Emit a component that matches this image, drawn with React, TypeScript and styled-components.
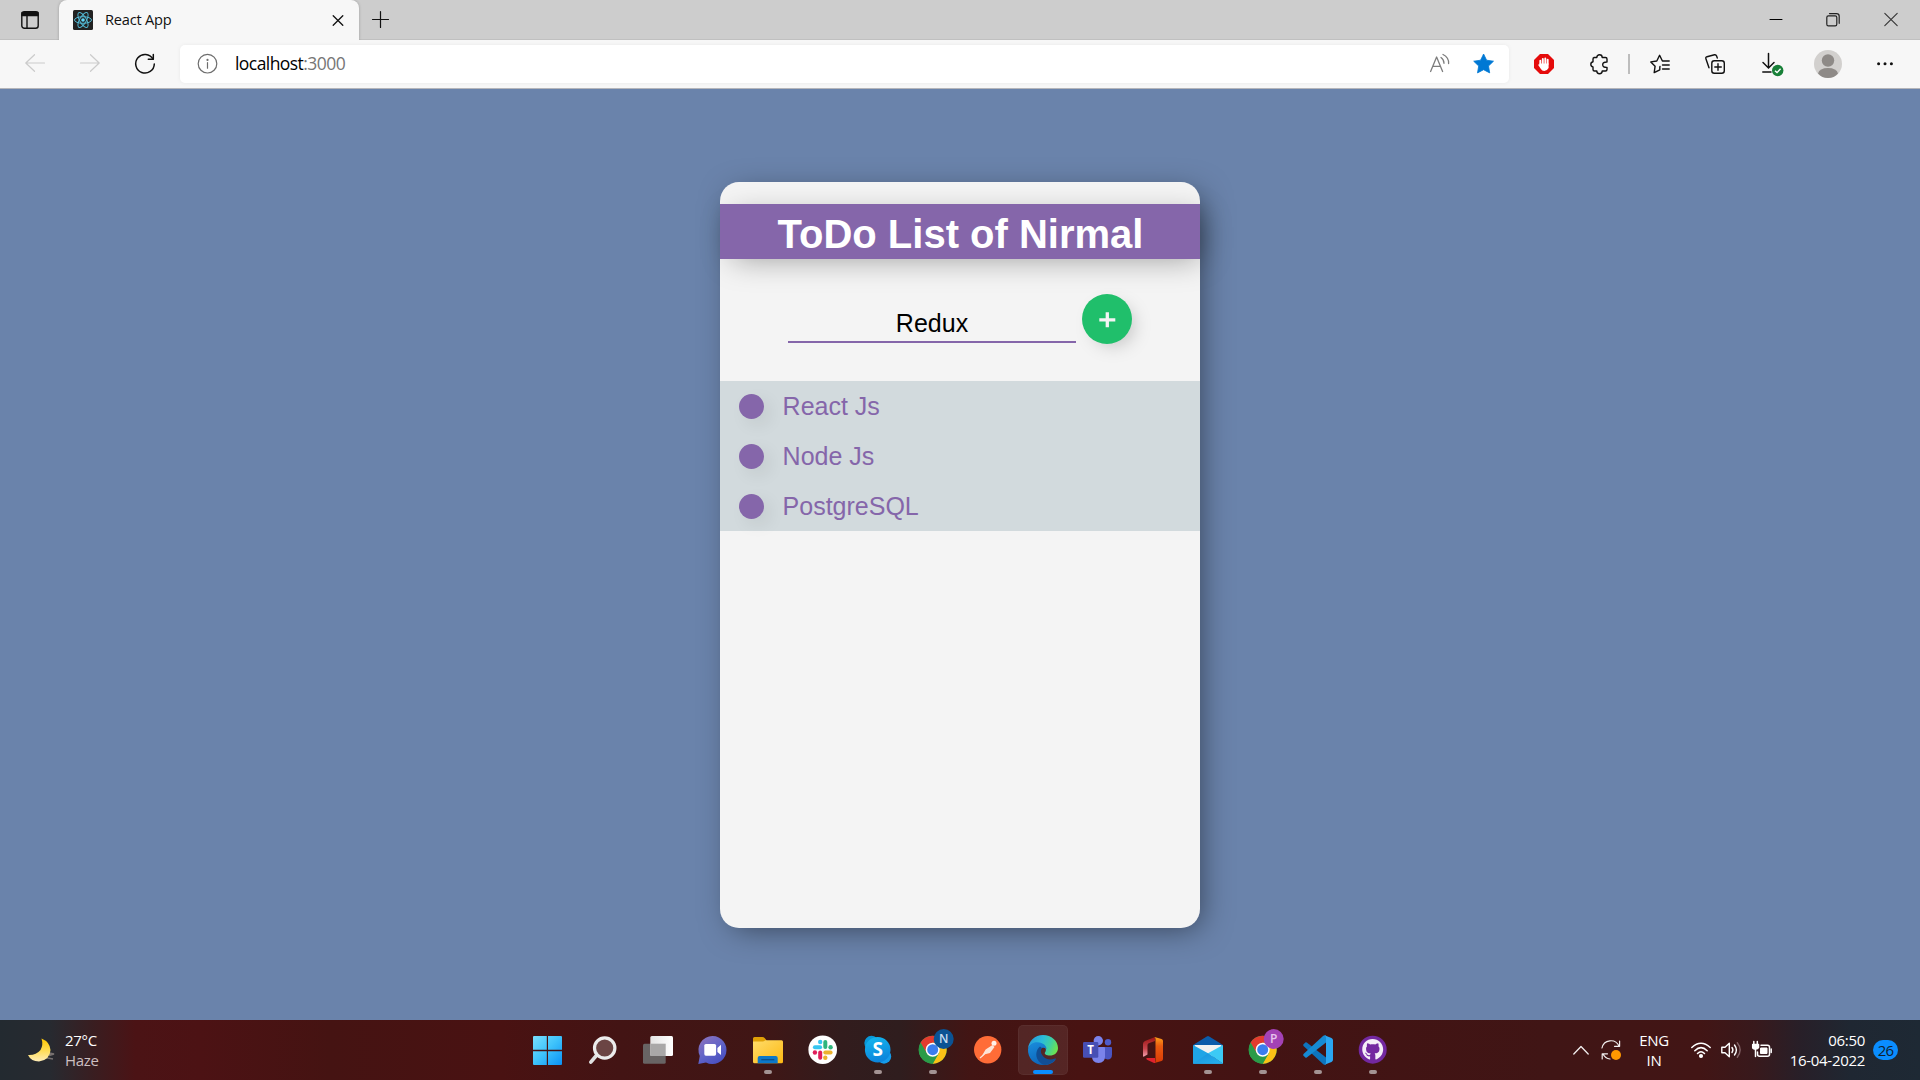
import React from "react";
import styled, { createGlobalStyle } from "styled-components";
import { FaGithub } from "react-icons/fa";

const Global = createGlobalStyle`
  * { box-sizing: border-box; }
  body { margin: 0; overflow: hidden; }
  button, input { font: inherit; border: 0; padding: 0; background: none; outline: 0; }
  svg { display: block; flex: none; overflow: visible; }
`;

const ui = `"Open Sans", "Noto Sans", sans-serif`;

const Screen = styled.div`
  width: 1920px;
  height: 1080px;
  display: flex;
  flex-direction: column;
  font-family: ${ui};
  overflow: hidden;
`;

/* ---------- Browser ---------- */

const TabStrip = styled.header`
  height: 40px;
  flex: none;
  display: flex;
  padding-right: 1px;
  background: #cdcdcd;
  box-shadow: inset 0 -1px 0 #c0c0c0;
`;

const Cell = styled.div<{ $w: number }>`
  width: ${(p) => p.$w}px;
  height: 100%;
  flex: none;
  display: flex;
  align-items: center;
  justify-content: center;
`;

const Tab = styled.div`
  width: 300px;
  height: 40px;
  padding: 0 15px 0 14px;
  display: flex;
  align-items: center;
  background: #f7f7f7;
  border-radius: 8px 8px 0 0;
  box-shadow: 0 0 3px rgba(0, 0, 0, 0.25);
  clip-path: inset(0 -4px 0 -4px);
`;

const TabTitle = styled.span`
  flex: 1;
  padding: 0 0 2px 12px;
  font-size: 14.6px;
  letter-spacing: -0.2px;
  line-height: 20px;
  color: #111;
`;

const Spacer = styled.div`
  flex: 1;
`;

const Toolbar = styled.nav`
  height: 49px;
  flex: none;
  display: flex;
  align-items: center;
  padding-left: 7px;
  background: #f7f7f7;
  border-bottom: 1px solid #b4b5ba;
`;

const Address = styled.div`
  width: 1329px;
  height: 38px;
  margin: 0 7px 0 0;
  padding: 0 15px 0 18px;
  display: flex;
  align-items: center;
  background: #fff;
  border-radius: 5px;
  box-shadow: 0 0 4px rgba(0, 0, 0, 0.06);
`;

const Url = styled.span`
  flex: 1;
  padding: 0 0 2px 17px;
  font-size: 17.5px;
  letter-spacing: -0.56px;
  line-height: 24px;
  color: #000;
  span { color: #767676; }
`;

const Divider = styled.div`
  width: 2px;
  height: 20px;
  margin: 0 1px;
  background: #bdbdbd;
`;

const AddressIcons = styled.div`
  display: flex;
  align-items: center;
  gap: 24px;
`;

/* ---------- Page ---------- */

const Page = styled.main`
  flex: 1;
  min-height: 0;
  padding-top: 93px;
  background: #6a83ab;
  font-family: "Liberation Sans", Arial, sans-serif;
`;

const lift = "6.25px 6.25px 31.25px -6.25px rgba(0, 0, 0, 0.5)";
const headerLift = "6.25px 6.25px 31.25px -6.25px rgba(0, 0, 0, 0.36)";
const softLift = "6.25px 6.25px 18.75px -6.25px rgba(0, 0, 0, 0.25)";

const Card = styled.section`
  width: 480px;
  height: 746px;
  margin: 0 auto;
  padding-top: 22px;
  background: #f4f4f4;
  border-radius: 19px;
  box-shadow: ${lift};
`;

const Title = styled.h1`
  margin: 0;
  height: 55px;
  padding: 7px 0 0 1px;
  background: #8566aa;
  color: #fff;
  font-size: 40px;
  line-height: 46px;
  text-align: center;
  box-shadow: ${headerLift};
`;

const Form = styled.form`
  display: flex;
  align-items: flex-start;
  gap: 6px;
  padding: 35px 68px 37px;
`;

const Field = styled.input`
  width: 288px;
  height: 49px;
  padding: 13px 0 2px;
  border-bottom: 2px solid #8566aa;
  font-size: 25px;
  text-align: center;
  color: #000;
`;

const Add = styled.button`
  width: 50px;
  height: 50px;
  display: flex;
  align-items: center;
  justify-content: center;
  border-radius: 50%;
  background: #20bf6b;
  box-shadow: ${softLift};
`;

const List = styled.ul`
  margin: 0;
  padding: 0;
  list-style: none;
  background: #d2dadd;
`;

const Item = styled.li`
  height: 50px;
  padding-left: 19px;
  display: flex;
  align-items: center;
  gap: 18.6px;
  font-size: 25px;
  line-height: 30px;
  color: #8566aa;
`;

const Dot = styled.button`
  width: 25px;
  height: 25px;
  margin-top: 1px;
  border-radius: 50%;
  background: #8566aa;
  box-shadow: 6.25px 6.25px 18.75px -3px rgba(0, 0, 0, 0.12);
`;

/* ---------- Taskbar ---------- */

const Taskbar = styled.footer`
  height: 60px;
  flex: none;
  display: flex;
  align-items: center;
  color: #fff;
  background: linear-gradient(
    90deg,
    #232a30 0, #272a30 50px, #3a1d20 95px, #4b1315 135px, #4c1214 200px, #451312 330px,
    #491212 500px, #431414 620px, #401615 760px, #321c1d 840px, #2f1d1e 900px, #421514 970px,
    #481312 1080px, #431313 1250px, #401515 1550px, #421515 1700px, #38191c 1755px,
    #281f28 1800px, #1f2732 1850px, #1e2934 1920px
  );
`;

const Weather = styled.div`
  width: 523px;
  padding-left: 27px;
  display: flex;
  align-items: center;
  gap: 9px;
`;

const Lines = styled.div<{ $align?: string; $w?: number }>`
  width: ${(p) => (p.$w ? p.$w + "px" : "auto")};
  padding-bottom: 1px;
  text-align: ${(p) => p.$align || "left"};
  font-size: 15px;
  line-height: 20px;
  letter-spacing: -0.3px;
  white-space: nowrap;
`;

const Muted = styled.div`
  color: #cdbfc1;
`;

const Apps = styled.div`
  display: flex;
  gap: 5px;
`;

const Tile = styled.div<{ $active?: boolean }>`
  width: 50px;
  height: 50px;
  display: grid;
  border-radius: 5px;
  background: ${(p) => (p.$active ? "rgba(255,255,255,.08)" : "none")};
  box-shadow: ${(p) => (p.$active ? "inset 0 0 0 1px rgba(255,255,255,.04)" : "none")};
  > * { grid-area: 1 / 1; }
`;

const Marker = styled.i<{ $active?: boolean }>`
  align-self: end;
  justify-self: center;
  width: ${(p) => (p.$active ? 20 : 8)}px;
  height: 4px;
  margin-bottom: 1px;
  border-radius: 2px;
  background: ${(p) => (p.$active ? "#0a8dff" : "#a39393")};
`;

const Tray = styled.div`
  flex: 1;
  display: flex;
  align-items: center;
  padding-left: 175px;
`;

const Network = styled.div`
  display: flex;
  padding: 0 10px 0 17px;
`;

const Count = styled.div`
  width: 25px;
  height: 20px;
  margin-left: 8px;
  border-radius: 10px;
  background: #0a8dff;
  color: #10202e;
  font-size: 15px;
  line-height: 20px;
  letter-spacing: -0.9px;
  text-align: center;
`;

const Line = ({ w = 20, h = 20, d, c = "#111", s = 1.5, children }: any) => (
  <svg width={w} height={h} viewBox={`0 0 ${w} ${h}`} fill="none" stroke={c} strokeWidth={s} strokeLinecap="round" strokeLinejoin="round">
    {d && <path d={d} />}
    {children}
  </svg>
);

const Art = ({ children }: { children: React.ReactNode }) => (
  <svg width="50" height="50" viewBox="0 0 50 50">{children}</svg>
);

const BadgeLetter = ({ fill, color, children }: any) => (
  <>
    <circle cx="35.7" cy="14" r="10" fill={fill} />
    <text x="35.7" y="18.3" fontSize="12" fontWeight="600" fontFamily={ui} textAnchor="middle" fill={color}>{children}</text>
  </>
);

const Chrome = () => (
  <g transform="translate(24.7 24.7)">
    <circle r="14" fill="#34a853" />
    <path d="M-12.1-7A14 14 0 0 1 12.1-7H0L-6 3.5Z" fill="#e33b2e" />
    <path d="M12.1-7A14 14 0 0 1 0 14L6 3.5L0-7Z" fill="#fbc116" />
    <path d="M-12.1-7A14 14 0 0 0 0 14L6 3.5L-6 3.5Z" fill="#2a9b48" />
    <circle r="7" fill="#fff" />
    <circle r="5.5" fill="#3b7ded" />
  </g>
);

const apps: { art: React.ReactNode; running?: boolean; active?: boolean }[] = [
  {
    art: (
      <Art>
        <defs>
          <linearGradient id="win" gradientUnits="userSpaceOnUse" x1="10" y1="10" x2="39" y2="39">
            <stop stopColor="#7be0fd" /><stop offset=".5" stopColor="#3fc3fb" /><stop offset="1" stopColor="#0c93f5" />
          </linearGradient>
        </defs>
        <path fill="url(#win)" d="M11 11H23.8V24.8H10V12Q10 11 11 11ZM25 11H38Q39 11 39 12V24.8H25ZM10 26.2H23.8V40H11Q10 40 10 39ZM25 26.2H39V39Q39 40 38 40H25Z" />
      </Art>
    ),
  },
  {
    art: (
      <Art>
        <path d="M18 31L12.8 37.2" stroke="#dfe0e0" strokeWidth="3.6" strokeLinecap="round" />
        <circle cx="26.7" cy="23" r="10.2" fill="#6b4544" stroke="#ececec" strokeWidth="3.2" />
      </Art>
    ),
  },
  {
    art: (
      <Art>
        <defs>
          <linearGradient id="tv"><stop stopColor="#e4e4e4" /><stop offset="1" stopColor="#fff" /></linearGradient>
        </defs>
        <rect x="10" y="18.7" width="22.7" height="20" rx="1.5" fill="#686464" />
        <rect x="17.3" y="11" width="22.7" height="20" rx="1.5" fill="url(#tv)" />
        <path d="M17.3 18.7H32.7V31H17.3Z" fill="#a9a8a8" />
      </Art>
    ),
  },
  {
    art: (
      <Art>
        <defs>
          <linearGradient id="chat" x2=".7" y2="1"><stop stopColor="#9175bd" /><stop offset=".6" stopColor="#5f63c8" /><stop offset="1" stopColor="#484fc0" /></linearGradient>
        </defs>
        <path fill="url(#chat)" d="M24.6 11A14 14 0 1 1 18 37.4L10.3 39L11.8 31A14 14 0 0 1 24.6 11Z" />
        <rect x="16.3" y="19" width="11.8" height="11.7" rx="1.6" fill="#fff" />
        <path d="M29.4 23L33 19.8V30L29.4 27Z" fill="#fff" />
      </Art>
    ),
  },
  {
    running: true,
    art: (
      <Art>
        <defs>
          <linearGradient id="fold" x2="1" y2="1"><stop stopColor="#ffdc6a" /><stop offset="1" stopColor="#fdb913" /></linearGradient>
        </defs>
        <path d="M10 13.5Q10 12 11.5 12H19.5Q20.8 12 21.6 13L23.5 15.3V20H10Z" fill="#dfa007" />
        <path d="M10 16.5H19.5Q21 16.5 22.3 15.3H38.5Q40 15.3 40 16.8V36.8Q40 38.3 38.5 38.3H11.5Q10 38.3 10 36.8Z" fill="url(#fold)" />
        <path d="M14.7 38.3V33Q14.7 31 16.7 31H32.7Q34.7 31 34.7 33V38.3Z" fill="#0c78c8" />
        <path d="M18.3 34.7H31.3" stroke="#0a4e8c" strokeWidth="1.3" />
      </Art>
    ),
  },
  {
    art: (
      <Art>
        <circle cx="24.7" cy="24.7" r="14.3" fill="#fff" />
        <g transform="translate(24.7 24.7)" strokeWidth="4" strokeLinecap="round">
          <path d="M-7.8-2.4H-2.6" stroke="#36c5f0" /><circle cx="-2.5" cy="-7.7" r="2.2" fill="#36c5f0" />
          <path d="M2.6-7.8V-2.6" stroke="#2eb67d" /><circle cx="7.9" cy="-2.5" r="2.2" fill="#2eb67d" />
          <path d="M2.6 2.8H7.9" stroke="#ecb22e" /><circle cx="2.6" cy="8" r="2.2" fill="#ecb22e" />
          <path d="M-2.5 2.8V8" stroke="#e01e5a" /><circle cx="-7.8" cy="2.8" r="2.2" fill="#e01e5a" />
        </g>
      </Art>
    ),
  },
  {
    running: true,
    art: (
      <Art>
        <defs>
          <linearGradient id="sky" x2=".3" y2="1"><stop stopColor="#13b9ef" /><stop offset="1" stopColor="#0c86dc" /></linearGradient>
        </defs>
        <circle cx="18.5" cy="18" r="7.2" fill="#0898d8" />
        <circle cx="31" cy="31.5" r="7.2" fill="#159cea" />
        <circle cx="24.7" cy="24.7" r="12.8" fill="url(#sky)" />
        <text x="24.7" y="31.4" fontSize="19" fontWeight="700" fontFamily={ui} textAnchor="middle" fill="#fff">S</text>
      </Art>
    ),
  },
  { running: true, art: <Art><Chrome /><BadgeLetter fill="#0b5394" color="#c8dcf0">N</BadgeLetter></Art> },
  {
    art: (
      <Art>
        <circle cx="24.7" cy="24.7" r="13.7" fill="#ff6c37" />
        <circle cx="31" cy="18.2" r="2.5" fill="#fff0e8" />
        <path d="M29.5 20L31.5 22L27 28L22 29.2L18 32.6L22.6 24.5Z" fill="#fde3d6" />
        <path d="M21.5 29L17 33" stroke="#fde3d6" strokeWidth="1.2" />
      </Art>
    ),
  },
  {
    running: true,
    active: true,
    art: (
      <Art>
        <defs>
          <linearGradient id="e1" x1="0" x2="1" y1=".2" y2=".5"><stop stopColor="#2697dc" /><stop offset=".45" stopColor="#2bbcd9" /><stop offset=".75" stopColor="#40d0a0" /><stop offset="1" stopColor="#6be154" /></linearGradient>
          <linearGradient id="e2" x2=".5" y2="1"><stop stopColor="#1a8ddd" /><stop offset="1" stopColor="#0c64b8" /></linearGradient>
        </defs>
        <path fill="url(#e1)" d="M10 24C10.5 16 17 10 25 10C33.5 10 40 16 40 23C40 28 36 30.5 32 30.5C28 30.5 26 29 27 27.5C29 25 28 20 21.5 18.2C16 17 11.5 20 10 24Z" />
        <path fill="url(#e2)" d="M10 24C11.5 19.5 15 17 19.5 17.2C25 17.3 29 21 28.5 24.5C28 23.5 26.5 22.3 24 23C20 25 20.5 33 27 36.5C31 38.5 35 36.5 38 34C35.5 38 31 40 25.5 40C16 40 9.5 33 10 24Z" />
        <path fill="#114e94" d="M22 21.5C17.5 25 16.5 33 22.5 38C24 39.3 25.5 40 27 39.9C31.5 39.6 36 37 38.2 33.3C37.5 33 33 36 28 33.5C23.5 31 21.5 26 24 23Z" />
      </Art>
    ),
  },
  {
    art: (
      <Art>
        <circle cx="35" cy="17.3" r="3.2" fill="#4f5bc9" />
        <path d="M30 22H38Q39 22 39 23V29.5Q39 34.5 34.5 34.5L30 33Z" fill="#4b55c2" />
        <circle cx="25.3" cy="15.7" r="4.7" fill="#7b83eb" />
        <path d="M19 22H31Q32 22 32 23V31.5Q32 38 25.5 38T19 31.5Z" fill="#7b83eb" />
        <rect x="10" y="17" width="15.3" height="15.7" rx="1.3" fill="#474fb4" />
        <text x="17.5" y="28.8" fontSize="11.5" fontWeight="700" fontFamily={ui} textAnchor="middle" fill="#fff">T</text>
      </Art>
    ),
  },
  {
    art: (
      <Art>
        <defs>
          <linearGradient id="o1" x2="0" y2="1"><stop stopColor="#9c1414" /><stop offset=".6" stopColor="#c8454c" /><stop offset="1" stopColor="#f4a0ae" /></linearGradient>
          <linearGradient id="o2" x2="0" y2="1"><stop stopColor="#ffa01a" /><stop offset=".35" stopColor="#e95a10" /><stop offset="1" stopColor="#d93a05" /></linearGradient>
        </defs>
        <path d="M27 12L17 16Q15 17 15 19V31Q15 32 16 31.5L19.5 29.5V20Q19.5 18.7 20.7 18.3L27 16Z" fill="url(#o1)" />
        <path d="M18.5 33Q18 34 19 34.7L26 38H27V33Z" fill="#e0222e" />
        <path d="M26.5 12L33.5 14Q35 14.5 35 16V34Q35 35.5 33.5 36L26.5 38Q27.5 37 27.5 36V14Q27.5 13 26.5 12Z" fill="url(#o2)" />
      </Art>
    ),
  },
  {
    running: true,
    art: (
      <Art>
        <defs>
          <linearGradient id="mail" x2="1" y2="1"><stop stopColor="#1791db" /><stop offset="1" stopColor="#27b1ee" /></linearGradient>
        </defs>
        <path d="M10 20L23.8 11.5Q25 10.7 26.2 11.5L40 20V26H10Z" fill="#0b5caa" />
        <path d="M11.5 20H38.5V27L25 34L11.5 27Z" fill="#f2f2f0" />
        <path d="M10 20L25 28.3L40 38.7H10Z" fill="#1fa5e6" />
        <path d="M40 20L25 28.3L40 38.7Z" fill="#3ccaf5" />
        <path d="M25 28.3L40 38.7H10Z" fill="url(#mail)" />
      </Art>
    ),
  },
  { running: true, art: <Art><Chrome /><BadgeLetter fill="#a342b5" color="#e8c4ee">P</BadgeLetter></Art> },
  {
    running: true,
    art: (
      <Art>
        <path d="M10.5 19.2L12.3 17.5Q13 17 13.8 17.6L33 32.5V39.5Q31.5 40.3 30.3 39.2L10.5 21Q9.7 20 10.5 19.2Z" fill="#0d74bd" />
        <path d="M10.5 30.8L12.3 32.5Q13 33 13.8 32.4L33 17.5V10.5Q31.5 9.7 30.3 10.8L10.5 29Q9.7 30 10.5 30.8Z" fill="#168ad3" />
        <path d="M31.5 10.2L38.5 13Q40 13.7 40 15.2V34.8Q40 36.3 38.5 37L31.5 39.8Q33 39 33 37V13Q33 11 31.5 10.2Z" fill="#2aa6f2" />
      </Art>
    ),
  },
  {
    running: true,
    art: (
      <Art>
        <circle cx="24.7" cy="24.7" r="14" fill="#7328a0" />
        <FaGithub x={13.9} y={13.7} size={21.6} color="#f4eef7" />
      </Art>
    ),
  },
];

const tasks = ["React Js", "Node Js", "PostgreSQL"];

export default function App() {
  return (
    <Screen>
      <Global />
      <TabStrip>
        <Cell $w={59}>
          <Line w={18} h={18} s={1.4}>
            <rect x=".8" y=".8" width="16.4" height="16.4" rx="2.5" />
            <path d="M1 1.5H17V4.5H1Z" fill="#111" />
            <path d="M6 5V17" />
          </Line>
        </Cell>
        <Tab>
          <svg width="20" height="20" viewBox="0 0 20 20">
            <rect width="20" height="20" rx="1.5" fill="#222" />
            <g fill="none" stroke="#53b9d4" strokeWidth="1">
              <ellipse cx="10" cy="10" rx="8.5" ry="3.3" />
              <ellipse cx="10" cy="10" rx="8.5" ry="3.3" transform="rotate(60 10 10)" />
              <ellipse cx="10" cy="10" rx="8.5" ry="3.3" transform="rotate(120 10 10)" />
            </g>
            <circle cx="10" cy="10" r="1.8" fill="#61dafb" />
          </svg>
          <TabTitle>React App</TabTitle>
          <Line w={12} h={12} d="M1.2 1.7L10.8 11.3M10.8 1.7L1.2 11.3" s={1.3} />
        </Tab>
        <Cell $w={43}><Line w={18} h={18} d="M8.5 .5V16.5M.5 8.5H16.5" s={1.2} /></Cell>
        <Spacer />
        <Cell $w={57}><Line w={14} h={14} d="M1 6.5H13" s={1} c="#000" /></Cell>
        <Cell $w={58}>
          <Line w={14} h={14} s={1.2} c="#222">
            <rect x=".8" y="2.8" width="10" height="10" rx="1.6" />
            <path d="M3.5 .6H10.5Q13.2 .6 13.2 3.3V10.3" />
          </Line>
        </Cell>
        <Cell $w={57}><Line w={14} h={14} d="M.8 .3L13.2 12.7M13.2 .3L.8 12.7" s={1.1} c="#333" /></Cell>
      </TabStrip>

      <Toolbar>
        <Cell $w={56}><Line d="M19.5 9H.8M9.5 .7L.8 9L9.5 17.3" c="#cbcbcb" s={1.2} /></Cell>
        <Cell $w={54}><Line d="M.5 9H19.2M10.5 .7L19.2 9L10.5 17.3" c="#cbcbcb" s={1.2} /></Cell>
        <Cell $w={56}>
          <Line>
            <path d="M18 5A9.3 9.3 0 1 0 19.3 10" />
            <path d="M18.3 .5V5.3H13.3" />
          </Line>
        </Cell>
        <Cell $w={7} />
        <Address>
          <Line c="#6d6d6d" s={1.2}>
            <circle cx="9.5" cy="9.7" r="9.3" />
            <path d="M9.5 8.7V14.2" />
            <circle cx="9.5" cy="5.9" r=".5" />
          </Line>
          <Url>localhost<span>:3000</span></Url>
          <AddressIcons>
            <Line c="#7d7d7d" s={1.3}>
              <path d="M.6 17.5L6.6 3L12.6 17.5M2.8 12.3H10.4" />
              <path d="M11 3.5Q14 5.5 14 9.3M13 .5Q19 3.5 18.6 9.5" />
            </Line>
            <svg width="20" height="20" viewBox="0 0 20 20">
              <path d="M9.6 0L12.6 6.2L19.5 7.2L14.5 12L15.7 18.9L9.6 15.7L3.5 18.9L4.7 12L-.3 7.2L6.6 6.2Z" fill="#0078d4" stroke="#0078d4" strokeLinejoin="round" strokeWidth=".8" />
            </svg>
          </AddressIcons>
        </Address>
        <Cell $w={56}>
          <svg width="20" height="20" viewBox="0 0 20 20">
            <path d="M6 0H14L20 6V14L14 20H6L0 14V6Z" fill="#e50b0b" />
            <path d="M6.3 10V6.8M8.8 10V5M11.3 10V4.4M13.7 10V5.8" stroke="#fff" strokeWidth="1.9" strokeLinecap="round" />
            <path d="M5.4 9.5H14.6V14Q13 17 10.3 17Q8 17 6.7 14.7L4.2 11Q4.6 9.8 5.4 10.5Z" fill="#fff" />
          </svg>
        </Cell>
        <Cell $w={54}>
          <Line w={20} h={20} s={1.4} d="M5 3.5H7.8A2.7 2.7 0 0 1 13.2 3.5H16.5Q18 3.5 18 5V8Q13.7 7.8 13.7 10.7T18 13.4V15.5Q18 17 16.5 17H13.2A2.7 2.7 0 0 1 7.8 17H5.5Q4 17 4 15.5V13A2.7 2.7 0 0 1 4 7.7V5Q4 3.5 5.5 3.5" />
        </Cell>
        <Cell $w={6}><Divider /></Cell>
        <Cell $w={56}>
          <Line s={1.4}>
            <path d="M10 12.5L9.8 13.2V15.8L4.2 18.6L5.1 12.2L.8 7.9L6.8 7L9.6 1.3L12.4 7H19.2" />
            <path d="M12.5 11H19.2M12.5 15H19.2" />
          </Line>
        </Cell>
        <Cell $w={54}>
          <Line s={1.4}>
            <rect x="6.8" y="6.8" width="12.5" height="12.5" rx="2.5" />
            <path d="M13 9.8V16.3M9.8 13H16.3" />
            <path d="M4 13.8L.9 4.7Q.4 3.2 2 2.7L9.5 .8Q11 .5 11.6 2L12.3 4" />
          </Line>
        </Cell>
        <Cell $w={62}>
          <svg width="22" height="22" viewBox="0 0 22 22">
            <path d="M6.5 .5V14.5M1 9.5L6.5 15L12 9.5M.8 19H9" fill="none" stroke="#111" strokeWidth="1.5" strokeLinecap="round" />
            <circle cx="15.7" cy="17.5" r="5.7" fill="#188038" />
            <path d="M13 17.7L15 19.6L18.6 15.7" fill="none" stroke="#fff" strokeWidth="1.4" />
          </svg>
        </Cell>
        <Cell $w={48}>
          <svg width="28" height="28" viewBox="0 0 28 28">
            <circle cx="14" cy="14" r="14" fill="#d2d0ce" />
            <circle cx="14" cy="10.5" r="6.2" fill="#8e8a87" />
            <path d="M4 23.5Q5.5 18 14 18T24 23.5Q20 28 14 28T4 23.5Z" fill="#8e8a87" />
          </svg>
        </Cell>
        <Cell $w={66}>
          <svg width="16" height="4" viewBox="0 0 16 4" fill="#111">
            <circle cx="1.6" cy="1.7" r="1.5" /><circle cx="8" cy="1.7" r="1.5" /><circle cx="14.4" cy="1.7" r="1.5" />
          </svg>
        </Cell>
      </Toolbar>

      <Page>
        <Card>
          <Title>ToDo List of Nirmal</Title>
          <Form onSubmit={(e) => e.preventDefault()}>
            <Field defaultValue="Redux" />
            <Add type="button" aria-label="Add">
              <svg width="16" height="16" viewBox="0 0 16 16">
                <path d="M8.3 1.3V16.3M.3 8.8H16.3" stroke="#f4f4f4" strokeWidth="3.3" />
              </svg>
            </Add>
          </Form>
          <List>
            {tasks.map((t) => (
              <Item key={t}><Dot aria-label={"Remove " + t} />{t}</Item>
            ))}
          </List>
        </Card>
      </Page>

      <Taskbar>
        <Weather>
          <svg width="29" height="26" viewBox="0 0 29 26">
            <defs>
              <linearGradient id="moon" x2="0" y2="1"><stop stopColor="#ffc800" /><stop offset=".5" stopColor="#ffdc50" /><stop offset="1" stopColor="#ffedb8" /></linearGradient>
            </defs>
            <path d="M20 15.5L27 17L22 18.5M18 20.5L26 22" stroke="#77706f" strokeWidth="1.5" fill="#77706f" />
            <path d="M14.5 1.5Q23 5 23.5 13Q23 23 12 24.5Q4 24.5 1 18Q9 18.5 13.5 13Q16.5 8 14.5 1.5Z" fill="url(#moon)" />
          </svg>
          <Lines>27°C<Muted>Haze</Muted></Lines>
        </Weather>
        <Apps>
          {apps.map((a, i) => (
            <Tile key={i} $active={a.active}>
              {a.art}
              {a.running && <Marker $active={a.active} />}
            </Tile>
          ))}
        </Apps>
        <Tray>
          <Line w={16} h={10} d="M.8 9L8 1.5L15.2 9" c="#f1eeee" s={1.3} />
          <Cell $w={45}>
            <Line w={22} h={20} c="#f1eeee" s={1.2}>
              <path d="M1 8A9 9 0 0 1 18 6M18.6 1V6.3H13.5M9 19A9 9 0 0 1 2 14M1.2 19V13.8H6.5" />
              <circle cx="15" cy="15" r="5" fill="#ff9800" stroke="none" />
            </Line>
          </Cell>
          <Lines $align="center" $w={40}>ENG<br />IN</Lines>
          <Network>
            <Line w={20} h={16} c="#fff" s={1.5}>
              <path d="M.8 5.5Q10 -3 19.2 5.5M3.8 8.7Q10 2.5 16.2 8.7M6.5 11.5Q10 8 13.5 11.5" />
              <circle cx="10" cy="14" r="1.3" fill="#fff" />
            </Line>
          </Network>
          <Line w={20} h={16} c="#fff" s={1.4}>
            <path d="M.8 5.3H4L8.3 1.3V14.7L4 10.7H.8Z" />
            <path d="M11 5.5Q12.8 8 11 10.5M13.5 3Q17.3 8 13.5 13" />
            <path d="M16.3 .8Q22 8 16.3 15.2" stroke="#806064" />
          </Line>
          <Cell $w={42}>
            <Line w={20} h={16} c="#fff" s={1.5}>
              <path d="M9 3.3H15.5Q17.5 3.3 17.5 5.3V12.2Q17.5 14.2 15.5 14.2H7.5Q5.5 14.2 5.5 12.2V10" />
              <path d="M9 6H15V11.5H8.5V8.5Z" fill="#fff" strokeWidth="1" />
              <path d="M19.2 7V10.5M1.8 -.5V2.5M5.3 -.5V2.5M3.5 6.5V14.5" />
              <path d="M.7 2.5H6.5V5.5Q6 7 3.5 7T.7 5.5Z" fill="#fff" />
            </Line>
          </Cell>
          <Lines $align="right" $w={82}>06:50<br />16-04-2022</Lines>
          <Count>26</Count>
        </Tray>
      </Taskbar>
    </Screen>
  );
}
